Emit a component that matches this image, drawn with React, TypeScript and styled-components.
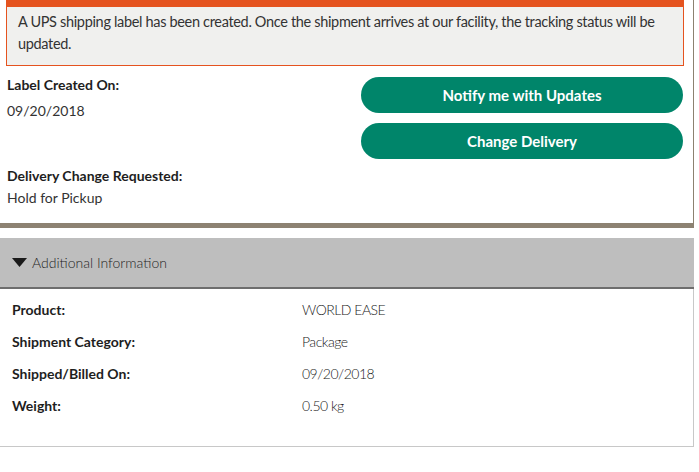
import styled, { createGlobalStyle } from "styled-components";

const GlobalStyle = createGlobalStyle`
  body {
    margin: 0;
    background: #ffffff;
    font-family: Lato, "Open Sans", sans-serif;
    color: #333333;
  }
`;

const details = [
  { label: "Product:", value: "WORLD EASE" },
  { label: "Shipment Category:", value: "Package" },
  { label: "Shipped/Billed On:", value: "09/20/2018" },
  { label: "Weight:", value: "0.50 kg" },
];

const App = () => {
  return (
    <Page>
      <GlobalStyle />
      <StatusCard>
        <Alert>
          A UPS shipping label has been created. Once the shipment arrives at
          our facility, the tracking status will be updated.
        </Alert>
        <StatusBody>
          <InfoColumn>
            <InfoGroup>
              <InfoLabel>Label Created On:</InfoLabel>
              <InfoValue>09/20/2018</InfoValue>
            </InfoGroup>
            <InfoGroup>
              <InfoLabel>Delivery Change Requested:</InfoLabel>
              <InfoValue tight>Hold for Pickup</InfoValue>
            </InfoGroup>
          </InfoColumn>
          <Actions>
            <PillButton>Notify me with Updates</PillButton>
            <PillButton>Change Delivery</PillButton>
          </Actions>
        </StatusBody>
      </StatusCard>

      <Accordion>
        <AccordionHeader>
          <svg width="15" height="9" viewBox="0 0 15 9">
            <polygon points="0,0 15,0 7.5,9" fill="#1a1a1a" />
          </svg>
          <span>Additional Information</span>
        </AccordionHeader>
        <AccordionBody>
          {details.map((d) => (
            <DetailRow key={d.label}>
              <DetailLabel>{d.label}</DetailLabel>
              <DetailValue>{d.value}</DetailValue>
            </DetailRow>
          ))}
        </AccordionBody>
      </Accordion>
    </Page>
  );
};

const Page = styled.div`
  width: 699px;
`;

const StatusCard = styled.section`
  padding: 0 9px 15px 6px;
  box-sizing: border-box;
  width: 694px;
  border-right: 1px solid #8c8170;
  border-bottom: 5px solid #8d8272;
`;

const Alert = styled.div`
  background: #f0f0ee;
  border: 1px solid #e5531f;
  border-top: 7px solid #e5531f;
  padding: 4px 11px 10px;
  font-size: 14.5px;
  line-height: 22px;
  color: #333333;
  letter-spacing: -0.33px;
`;

const StatusBody = styled.div`
  display: grid;
  grid-template-columns: 1fr 323px;
  gap: 20px;
`;

const InfoColumn = styled.div`
  display: flex;
  flex-direction: column;
  gap: 45px;
  padding-top: 9px;
`;

const InfoGroup = styled.div`
  display: flex;
  flex-direction: column;
`;

const InfoLabel = styled.div`
  font-size: 14px;
  line-height: 20px;
  font-weight: 700;
  color: #1e1e1e;
  padding-left: 1px;
`;

const InfoValue = styled.div<{ tight?: boolean }>`
  font-size: 14px;
  line-height: 20px;
  color: #333333;
  margin-top: ${(p) => (p.tight ? "2px" : "6px")};
  padding-left: 1px;
`;

const Actions = styled.div`
  display: flex;
  flex-direction: column;
  gap: 10px;
  padding-top: 11px;
  margin-right: 1px;
`;

const PillButton = styled.button`
  height: 36px;
  border: none;
  border-radius: 18px;
  background: #00856a;
  color: #ffffff;
  font-family: Lato, "Open Sans", sans-serif;
  font-size: 15px;
  font-weight: 700;
  cursor: pointer;
`;

const Accordion = styled.section`
  margin-top: 10px;
  width: 694px;
`;

const AccordionHeader = styled.div`
  display: flex;
  align-items: center;
  gap: 5px;
  height: 49px;
  padding-left: 12px;
  background: #bebebe;
  border-bottom: 2px solid #6e6e6e;
  font-size: 14px;
  font-weight: 300;
  color: #1e1e1e;
`;

const AccordionBody = styled.div`
  padding: 4px 12px 25px;
  border-right: 1px solid #c8c8c8;
  border-bottom: 1px solid #c8c8c8;
`;

const DetailRow = styled.div`
  display: grid;
  grid-template-columns: 290px 1fr;
  height: 32px;
  align-items: center;
  font-size: 14px;
`;

const DetailLabel = styled.div`
  font-weight: 700;
  color: #1e1e1e;
`;

const DetailValue = styled.div`
  color: #222222;
  font-weight: 300;
  letter-spacing: -0.5px;
`;

export default App;
